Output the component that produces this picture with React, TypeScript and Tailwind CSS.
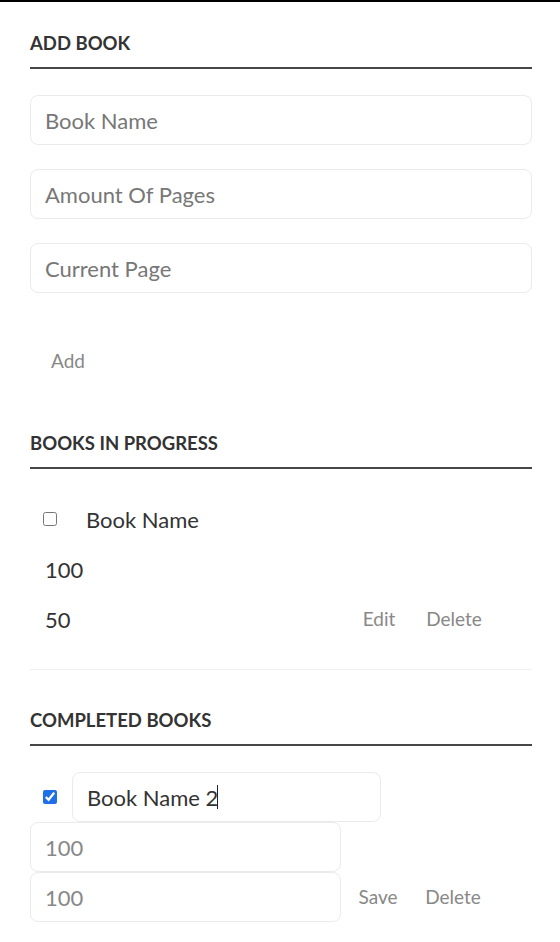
import { useState } from "react"

const font = { fontFamily: "Lato, 'Open Sans', sans-serif" }

function Heading({ title, className }: { title: string; className?: string }) {
  return (
    <div
      className={`pb-[11px] border-b-2 border-[#474747] text-[18.5px] leading-[26px] font-bold uppercase text-[#333] ${className ?? ""}`}
    >
      {title}
    </div>
  )
}

const inputCls =
  "h-[50px] rounded-[8px] border border-[#ebebeb] bg-white px-[14px] text-[22px] text-[#333] placeholder:text-[#777] outline-none"

export default function App() {
  const [name, setName] = useState("")
  const [pages, setPages] = useState("")
  const [current, setCurrent] = useState("")
  const [editName, setEditName] = useState("Book Name 2")

  return (
    <div className="min-h-screen bg-white border-t-2 border-black" style={font}>
      <div className="pl-[30px] pr-[28px] pb-10">
        <Heading title="Add Book" className="pt-[28px]" />

        <div className="mt-[26px] flex flex-col gap-[24px]">
          <input className={inputCls} placeholder="Book Name" value={name} onChange={(e) => setName(e.target.value)} />
          <input className={inputCls} placeholder="Amount Of Pages" value={pages} onChange={(e) => setPages(e.target.value)} />
          <input className={inputCls} placeholder="Current Page" value={current} onChange={(e) => setCurrent(e.target.value)} />
        </div>

        <button className="mt-[48px] h-[40px] px-[21px] text-[19px] text-[#888]">Add</button>

        <Heading title="Books In Progress" className="mt-[49px]" />

        {/* in progress */}
        <div className="mt-[25px] pb-[25px] border-b border-[#f0f0f0]">
          <div className="flex items-center h-[50px]">
            <div className="w-[42px] flex items-center pl-[13px]">
              <input type="checkbox" className="w-[14px] h-[14px] m-0" />
            </div>
            <span className="px-[14px] text-[22px] text-[#333]">Book Name</span>
          </div>
          <div className="flex items-center h-[50px]">
            <span className="px-[15px] text-[22px] text-[#333]">100</span>
          </div>
          <div className="flex items-center h-[50px]">
            <span className="w-[311px] px-[15px] text-[22px] text-[#333]">50</span>
            <button className="ml-[1px] w-[74px] text-[19px] text-[#888]">Edit</button>
            <button className="w-[76px] text-[19px] text-[#888]">Delete</button>
          </div>
        </div>

        <Heading title="Completed Books" className="mt-[37px]" />

        {/* completed, edit mode */}
        <div className="mt-[26px]">
          <div className="flex items-center h-[50px]">
            <div className="w-[42px] flex items-center pl-[13px]">
              <input type="checkbox" defaultChecked className="w-[14px] h-[14px] m-0 accent-[#1f6fe8]" />
            </div>
            <div className="relative">
              <input
                className={`${inputCls} w-[309px] h-[50px]`}
                value={editName}
                onChange={(e) => setEditName(e.target.value)}
              />
              <span className="absolute left-[145px] top-[13px] w-px h-[24px] bg-[#222]" />
            </div>
          </div>
          <input className={`${inputCls} w-[311px] block text-[#888]`} defaultValue="100" />
          <div className="flex items-center">
            <input className={`${inputCls} w-[311px] text-[#888]`} defaultValue="100" />
            <button className="w-[74px] text-[19px] text-[#888]">Save</button>
            <button className="w-[76px] text-[19px] text-[#888]">Delete</button>
          </div>
        </div>
      </div>
    </div>
  )
}
